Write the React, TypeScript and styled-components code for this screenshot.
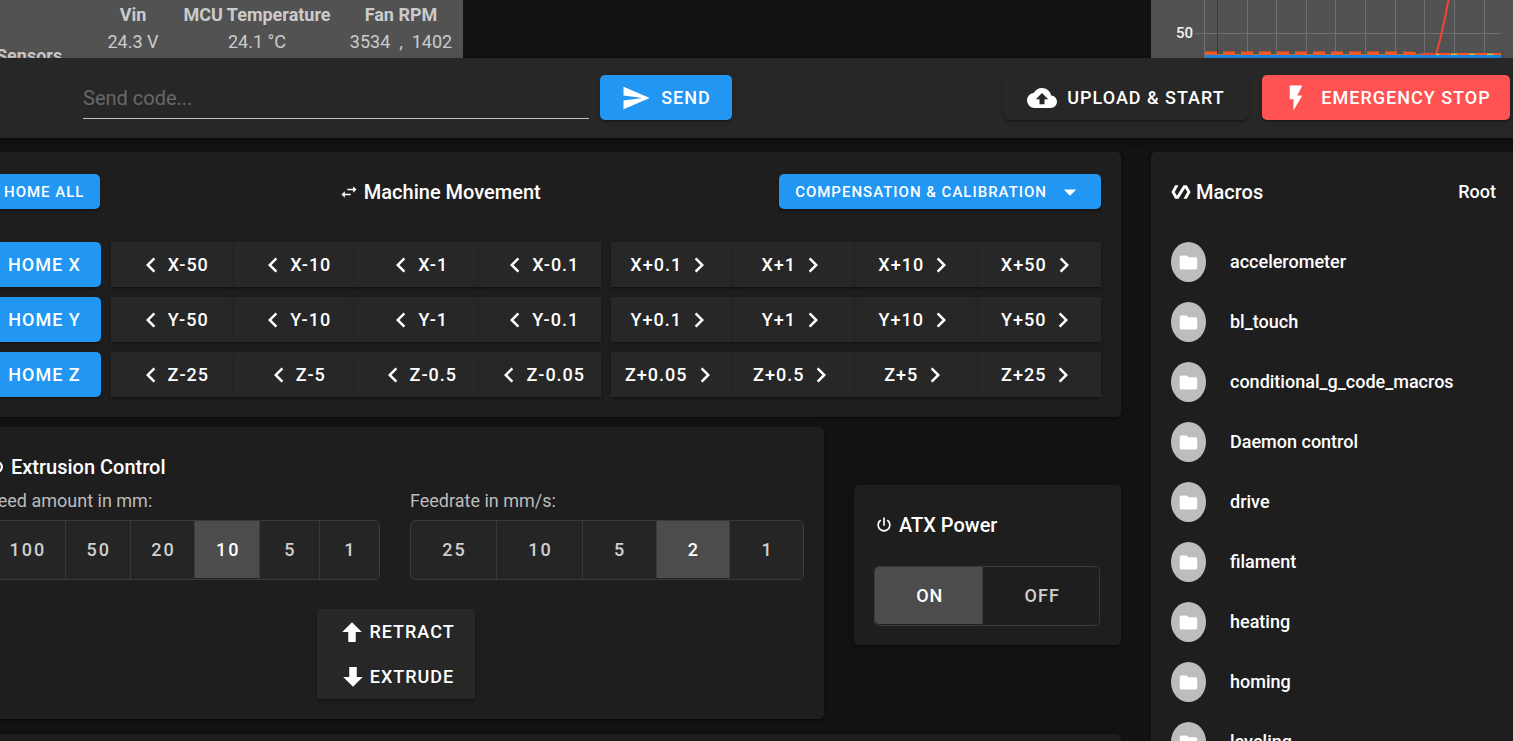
import React, { useState } from "react";
import styled, { createGlobalStyle } from "styled-components";

const GlobalStyle = createGlobalStyle`
  *, *::before, *::after { box-sizing: border-box; }
  body {
    margin: 0;
    overflow: hidden;
    background: #121212;
    color: #fff;
    font-family: Roboto, "Liberation Sans", sans-serif;
    font-size: 18px;
    line-height: 27px;
  }
  button, input { font-family: inherit; }
  h2, ul { margin: 0; padding: 0; }
`;

const icons = {
  send: "M2,21L23,12L2,3V10L17,12L2,14V21Z",
  upload:
    "M14,13V17H10V13H7L12,8L17,13M19.35,10.03C18.67,6.59 15.64,4 12,4C9.11,4 6.6,5.64 5.35,8.03C2.34,8.36 0,10.9 0,14A6,6 0 0,0 6,20H19A5,5 0 0,0 24,15C24,12.36 21.95,10.22 19.35,10.03Z",
  flash: "M7,2V13H10V22L17,10H13L17,2H7Z",
  menuDown: "M7,10L12,15L17,10H7Z",
  chevronLeft:
    "M15.41,16.58L10.83,12L15.41,7.41L14,6L8,12L14,18L15.41,16.58Z",
  chevronRight:
    "M8.59,16.58L13.17,12L8.59,7.41L10,6L16,12L10,18L8.59,16.58Z",
  swap: "M21,9L17,5V8H10V10H17V13M7,11L3,15L7,19V16H14V14H7V11Z",
  power:
    "M16.56,5.44L15.11,6.89C16.84,7.94 18,9.83 18,12A6,6 0 0,1 12,18A6,6 0 0,1 6,12C6,9.83 7.16,7.94 8.88,6.88L7.44,5.44C5.36,6.88 4,9.28 4,12A8,8 0 0,0 12,20A8,8 0 0,0 20,12C20,9.28 18.64,6.88 16.56,5.44M13,3H11V13H13",
  polymer:
    "M19,4H15L7.1,16.63L4.5,12L9,4H5L0.5,12L5,20H9L16.89,7.37L19.5,12L15,20H19L23.5,12L19,4Z",
  arrowUp: "M15,20H9V12H4.16L12,4.16L19.84,12H15V20Z",
  arrowDown: "M9,4H15V12H19.84L12,19.84L4.16,12H9V4Z",
  folder:
    "M10,4H4C2.89,4 2,4.89 2,6V18A2,2 0 0,0 4,20H20A2,2 0 0,0 22,18V8C22,6.89 21.1,6 20,6H12L10,4Z",
  ring: "M12,4A8,8 0 0,1 20,12A8,8 0 0,1 12,20A8,8 0 0,1 4,12A8,8 0 0,1 12,4M12,7A5,5 0 0,0 7,12A5,5 0 0,0 12,17A5,5 0 0,0 17,12A5,5 0 0,0 12,7Z",
};

const Svg = styled.svg`
  flex: none;
  display: block;
  fill: currentColor;
`;

function Icon({ name, size = 30 }: { name: keyof typeof icons; size?: number }) {
  return (
    <Svg width={size} height={size} viewBox="0 0 24 24" aria-hidden="true">
      <path d={icons[name]} />
    </Svg>
  );
}

const raised =
  "0 3px 1px -2px rgba(0,0,0,.2), 0 2px 2px rgba(0,0,0,.14), 0 1px 5px rgba(0,0,0,.12)";

const Page = styled.div`
  display: flex;
  flex-direction: column;
  height: 100vh;
  overflow: hidden;
`;

const TopStrip = styled.div`
  display: flex;
  justify-content: space-between;
  flex: none;
  height: 58px;
  overflow: hidden;
`;

const StatusPanel = styled.section`
  width: 463px;
  background: #525252;
  color: #cbcbcb;
`;

const StatusTable = styled.table`
  table-layout: fixed;
  width: 456px;
  margin-top: 1px;
  border-collapse: collapse;
  text-align: center;
  white-space: nowrap;

  tr { height: 27px; }
  th, td { padding: 0; }
  td { white-space: pre; }
`;

const SensorsHead = styled.th`
  vertical-align: top;
  text-align: left;

  span {
    display: block;
    margin: 41px 0 0 -4px;
  }
`;

const ChartPanel = styled.section`
  width: 362px;
  background: #525252;
`;

const Toolbar = styled.header`
  position: relative;
  z-index: 1;
  display: flex;
  align-items: center;
  flex: none;
  height: 80px;
  padding: 0 3px 1px 83px;
  background: #272727;
  box-shadow: 0 2px 4px -1px rgba(0,0,0,.2), 0 4px 5px rgba(0,0,0,.14),
    0 1px 10px rgba(0,0,0,.12);
`;

const CodeInput = styled.input`
  width: 506px;
  height: 43px;
  margin-right: 11px;
  padding: 1px 0 0;
  border: 0;
  border-bottom: 1px solid #c1c1c1;
  outline: 0;
  background: transparent;
  color: #fff;
  font-size: 20px;

  &::placeholder { color: #676767; opacity: 1; }
`;

const Spacer = styled.div`
  flex: 1;
`;

const Button = styled.button<{ $tone?: string; $small?: boolean }>`
  display: flex;
  align-items: center;
  justify-content: center;
  gap: ${(p) => (p.$small ? 8 : 10)}px;
  flex: none;
  height: ${(p) => (p.$small ? 35 : 45)}px;
  padding: 0 ${(p) => (p.$small ? 16 : 20)}px;
  border: 0;
  border-radius: 5px;
  background: ${(p) => p.$tone || "#272727"};
  box-shadow: ${raised};
  color: #fff;
  font-size: ${(p) => (p.$small ? 15 : 18)}px;
  font-weight: 500;
  letter-spacing: 1px;
  text-transform: uppercase;
  white-space: nowrap;
  cursor: pointer;
`;

const ToolbarButton = styled(Button)<{ $width: number }>`
  width: ${(p) => p.$width}px;
  padding: 0;

  & + & { margin-left: 14px; }
`;

const Body = styled.main`
  display: grid;
  grid-template-columns: minmax(0, 1fr) 362px;
  gap: 30px;
  flex: 1;
  min-height: 0;
  margin-left: -32px;
  padding-top: 14px;
`;

const Column = styled.div`
  display: flex;
  flex-direction: column;
  min-width: 0;
`;

const Card = styled.section`
  padding: 20px;
  border-radius: 5px;
  background: #1e1e1e;
  box-shadow: ${raised};
`;

const CardTitle = styled.h2`
  display: flex;
  align-items: center;
  gap: 5px;
  font-size: 20px;
  font-weight: 500;
  line-height: 40px;
`;

const MovementHead = styled.div`
  display: flex;
  align-items: center;
  justify-content: space-between;
  height: 39px;
  margin-bottom: 31px;
`;

const MoveTitle = styled(CardTitle)`
  flex: 1;
  justify-content: center;
`;

const AxisRow = styled.div`
  display: flex;
  gap: 10px;

  & + & { margin-top: 10px; }
`;

const HomeButton = styled(Button)`
  width: 113px;
`;

const MoveGroup = styled.div`
  display: grid;
  grid-template-columns: repeat(4, minmax(0, 1fr));
  flex: 1;
`;

const MoveButton = styled(Button)`
  gap: 2px;
  padding: 0;
  border-radius: 0;
`;

const LowerRow = styled.div`
  display: grid;
  grid-template-columns: minmax(0, 1fr) 267px;
  align-items: start;
  gap: 30px;
  margin: 10px 0 15px;
`;

const ExtrusionCard = styled(Card)`
  height: 292px;
`;

const ExtrusionOptions = styled.div`
  display: grid;
  grid-template-columns: 199fr 200fr;
  gap: 30px;
`;

const Label = styled.p`
  margin: 0 0 6px;
  color: #bcbcbc;
`;

const ToggleGroup = styled.div<{ $plain?: boolean }>`
  display: flex;
  height: 60px;
  border: 1px solid #3a3a3a;
  border-radius: 5px;
  background: ${(p) => (p.$plain ? "#1e1e1e" : "#252525")};
`;

const Toggle = styled.button<{ $on: boolean }>`
  flex: 1 1 auto;
  min-width: 60px;
  height: ${(p) => (p.$on ? 57 : 58)}px;
  padding: 0 14px ${(p) => (p.$on ? 0 : 1)}px 16px;
  border: 0;
  border-left: 1px solid #3a3a3a;
  background: ${(p) => (p.$on ? "#4c4c4c" : "transparent")};
  color: ${(p) => (p.$on ? "#fff" : "#cfcfcf")};
  font-size: 18px;
  font-weight: 500;
  letter-spacing: 2px;
  cursor: pointer;

  &:first-child { border-left: 0; border-radius: 4px 0 0 4px; }
  &:last-child { border-radius: 0 4px 4px 0; }
`;

const FeedActions = styled.div`
  width: 158px;
  margin: 29px auto 0;
`;

const FeedButton = styled(Button)`
  width: 100%;
  gap: 2px;
  border-radius: 0;
`;

const PowerCard = styled(Card)`
  margin-top: 58px;
  height: 160px;
`;

const PowerToggles = styled(ToggleGroup)`
  width: 226px;
  margin-top: 21px;

  button { letter-spacing: 1px; }
`;

const NextCard = styled(Card)`
  flex: 1;
`;

const MacroCard = styled(Card)`
  border-radius: 5px 0 0 0;
`;

const MacroHead = styled.div`
  display: flex;
  align-items: center;
  justify-content: space-between;
  height: 40px;
`;

const RootLink = styled.a`
  margin-right: -3px;
  color: #fff;
  font-weight: 500;
  line-height: 28px;
  text-decoration: none;
`;

const MacroList = styled.ul`
  margin-top: 20px;
  list-style: none;
`;

const MacroItem = styled.li`
  display: flex;
  align-items: center;
  height: 60px;
  font-weight: 500;
  line-height: 28px;
`;

const Avatar = styled.span`
  display: flex;
  align-items: center;
  justify-content: center;
  width: 35px;
  height: 40px;
  margin-right: 24px;
  border-radius: 50%;
  background: #bdbdbd;
`;

const AxisLabel = styled.text`
  fill: #f2f2f2;
  font-size: 15px;
  font-weight: 500;
`;

const gridLines = [96, 125, 155, 184, 214, 244, 273, 303, 333];

function TemperatureChart() {
  return (
    <svg width="362" height="58" viewBox="0 0 362 58">
      <g stroke="#707070" strokeWidth="1">
        <path d="M53.5 0V58M44 33.5H350" />
        {gridLines.map((x) => (
          <path key={x} d={`M${x}.5 0V58`} />
        ))}
      </g>
      <path d="M66.5 0V58" stroke="#3b3b3b" />
      <AxisLabel x="25" y="38">
        50
      </AxisLabel>
      <path d="M54 54.5H350" stroke="#a87a50" strokeWidth="1" />
      <path d="M284 54.5H350" stroke="#d4cf45" strokeWidth="2" />
      <path
        d="M54 53H250Q262 53 272 54.5H350"
        fill="none"
        stroke="#ff5722"
        strokeWidth="3"
        strokeDasharray="12 6"
      />
      <path
        d="M270 54.5H282Q285 54.5 286 51Q292 30 297.5 0"
        fill="none"
        stroke="#f44336"
        strokeWidth="2"
      />
      <path d="M54 56.5H350" stroke="#1e88e5" strokeWidth="3" />
    </svg>
  );
}

const axes = [
  { axis: "X", minus: ["50", "10", "1", "0.1"], plus: ["0.1", "1", "10", "50"] },
  { axis: "Y", minus: ["50", "10", "1", "0.1"], plus: ["0.1", "1", "10", "50"] },
  { axis: "Z", minus: ["25", "5", "0.5", "0.05"], plus: ["0.05", "0.5", "5", "25"] },
];

const macros = [
  "accelerometer",
  "bl_touch",
  "conditional_g_code_macros",
  "Daemon control",
  "drive",
  "filament",
  "heating",
  "homing",
  "leveling",
];

function Toggles({
  values,
  initial,
  label,
  plain = false,
}: {
  values: string[];
  initial: string;
  label: string;
  plain?: boolean;
}) {
  const [current, setCurrent] = useState(initial);
  const Group = plain ? PowerToggles : ToggleGroup;
  return (
    <Group role="group" aria-label={label} $plain={plain}>
      {values.map((v) => (
        <Toggle
          key={v}
          type="button"
          $on={v === current}
          aria-pressed={v === current}
          onClick={() => setCurrent(v)}
        >
          {v}
        </Toggle>
      ))}
    </Group>
  );
}

export default function App() {
  return (
    <Page>
      <GlobalStyle />
      <TopStrip>
        <StatusPanel>
          <StatusTable>
            <colgroup>
              <col width="98" />
              <col width="70" />
              <col width="178" />
              <col width="110" />
            </colgroup>
            <tbody>
              <tr>
                <SensorsHead rowSpan={3}>
                  <span>Sensors</span>
                </SensorsHead>
                <th>Vin</th>
                <th>MCU Temperature</th>
                <th>Fan RPM</th>
              </tr>
              <tr>
                <td>24.3 V</td>
                <td>24.1 °C</td>
                <td>{"3534  ,  1402"}</td>
              </tr>
              <tr>
                <td colSpan={3} />
              </tr>
            </tbody>
          </StatusTable>
        </StatusPanel>
        <ChartPanel>
          <TemperatureChart />
        </ChartPanel>
      </TopStrip>

      <Toolbar>
        <CodeInput type="text" placeholder="Send code..." aria-label="Send code" />
        <ToolbarButton type="button" $tone="#2196f3" $width={132}>
          <Icon name="send" />
          Send
        </ToolbarButton>
        <Spacer />
        <ToolbarButton type="button" $width={244}>
          <Icon name="upload" />
          Upload &amp; Start
        </ToolbarButton>
        <ToolbarButton type="button" $tone="#ff5252" $width={248}>
          <Icon name="flash" />
          Emergency Stop
        </ToolbarButton>
      </Toolbar>

      <Body>
        <Column>
          <Card>
            <MovementHead>
              <Button type="button" $small $tone="#2196f3">
                Home all
              </Button>
              <MoveTitle>
                <Icon name="swap" size={20} />
                Machine Movement
              </MoveTitle>
              <Button type="button" $small $tone="#2196f3">
                Compensation &amp; Calibration
                <Icon name="menuDown" />
              </Button>
            </MovementHead>
            {axes.map(({ axis, minus, plus }) => (
              <AxisRow key={axis}>
                <HomeButton type="button" $tone="#2196f3">
                  Home {axis}
                </HomeButton>
                <MoveGroup>
                  {minus.map((step) => (
                    <MoveButton key={step} type="button">
                      <Icon name="chevronLeft" />
                      {`${axis}-${step}`}
                    </MoveButton>
                  ))}
                </MoveGroup>
                <MoveGroup>
                  {plus.map((step) => (
                    <MoveButton key={step} type="button">
                      {`${axis}+${step}`}
                      <Icon name="chevronRight" />
                    </MoveButton>
                  ))}
                </MoveGroup>
              </AxisRow>
            ))}
          </Card>

          <LowerRow>
            <ExtrusionCard>
              <CardTitle>
                <Icon name="ring" size={18} />
                Extrusion Control
              </CardTitle>
              <ExtrusionOptions>
                <div>
                  <Label>Feed amount in mm:</Label>
                  <Toggles
                    label="Feed amount in mm"
                    values={["100", "50", "20", "10", "5", "1"]}
                    initial="10"
                  />
                </div>
                <div>
                  <Label>Feedrate in mm/s:</Label>
                  <Toggles
                    label="Feedrate in mm/s"
                    values={["25", "10", "5", "2", "1"]}
                    initial="2"
                  />
                </div>
              </ExtrusionOptions>
              <FeedActions>
                <FeedButton type="button">
                  <Icon name="arrowUp" />
                  Retract
                </FeedButton>
                <FeedButton type="button">
                  <Icon name="arrowDown" />
                  Extrude
                </FeedButton>
              </FeedActions>
            </ExtrusionCard>
            <PowerCard>
              <CardTitle>
                <Icon name="power" size={20} />
                ATX Power
              </CardTitle>
              <Toggles
                label="ATX Power"
                values={["ON", "OFF"]}
                initial="ON"
                plain
              />
            </PowerCard>
          </LowerRow>
          <NextCard />
        </Column>

        <MacroCard>
          <MacroHead>
            <CardTitle>
              <Icon name="polymer" size={20} />
              Macros
            </CardTitle>
            <RootLink href="#root">Root</RootLink>
          </MacroHead>
          <MacroList>
            {macros.map((name) => (
              <MacroItem key={name}>
                <Avatar>
                  <Icon name="folder" size={21} />
                </Avatar>
                {name}
              </MacroItem>
            ))}
          </MacroList>
        </MacroCard>
      </Body>
    </Page>
  );
}
